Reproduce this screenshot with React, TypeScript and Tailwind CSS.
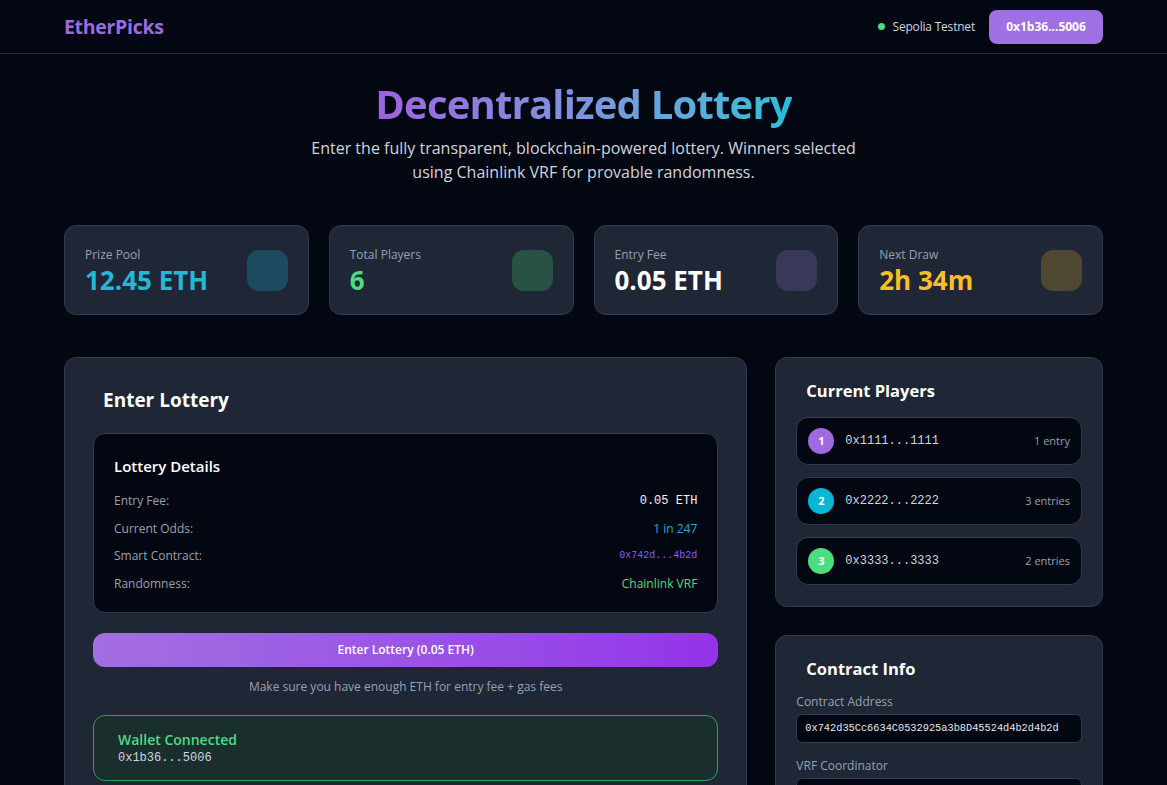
import React from "react";

const stats = [
  { label: "Prize Pool", value: "12.45 ETH", valueClass: "text-[#22b8d8]", boxClass: "bg-[#1c4a5e]" },
  { label: "Total Players", value: "6", valueClass: "text-[#4ade80]", boxClass: "bg-[#285243]" },
  { label: "Entry Fee", value: "0.05 ETH", valueClass: "text-white", boxClass: "bg-[#3a3858]" },
  { label: "Next Draw", value: "2h 34m", valueClass: "text-[#fbbf24]", boxClass: "bg-[#4e4833]" },
];

const players = [
  { n: 1, addr: "0x1111...1111", entries: "1 entry", dot: "bg-[#9f6ae0]" },
  { n: 2, addr: "0x2222...2222", entries: "3 entries", dot: "bg-[#06b6d4]" },
  { n: 3, addr: "0x3333...3333", entries: "2 entries", dot: "bg-[#4ade80]" },
];

const mono = "font-['Liberation_Mono',monospace]";

const App = () => {
  return (
    <div className="min-h-screen bg-[#030712] text-white font-['Open_Sans',sans-serif]">
      {/* Header */}
      <header className="h-[54px] border-b border-[#1e293b]">
        <div className="h-full px-16 flex items-center justify-between">
          <span className="text-[19.5px] font-bold text-[#9b6be0] tracking-[-0.3px]">EtherPicks</span>
          <div className="flex items-center">
            <span className="w-[7px] h-[7px] rounded-full bg-[#4ade80] mr-[8px]" />
            <span className="text-[12px] tracking-[-0.2px] text-gray-300 mr-[14px]">Sepolia Testnet</span>
            <button className="h-[34px] w-[114px] rounded-lg bg-[#9f70e3] text-white text-[12px] font-bold">
              0x1b36...5006
            </button>
          </div>
        </div>
      </header>

      <main className="px-16">
        {/* Hero */}
        <section className="pt-[26px] text-center">
          <h1 className="text-[40px] leading-[48px] font-bold tracking-[-0.8px] bg-gradient-to-r from-[#9d62e0] to-[#1fc0d8] bg-clip-text text-transparent inline-block">
            Decentralized Lottery
          </h1>
          <p className="mt-2 mx-auto max-w-[560px] text-[16px] leading-6 text-gray-300">
            Enter the fully transparent, blockchain-powered lottery. Winners selected using Chainlink VRF for provable randomness.
          </p>
        </section>

        {/* Stats */}
        <section className="mt-[41px] grid grid-cols-4 gap-5">
          {stats.map((s) => (
            <div
              key={s.label}
              className="h-[90px] rounded-xl bg-[#1f2635] border border-[#323b4b] px-5 flex items-center justify-between"
            >
              <div className="pt-[3px]">
                <div className="text-[12px] leading-4 font-medium text-gray-400">{s.label}</div>
                <div className={`mt-px text-[26px] leading-8 font-bold ${s.valueClass}`}>{s.value}</div>
              </div>
              <div className={`w-[41px] h-[41px] rounded-xl ${s.boxClass}`} />
            </div>
          ))}
        </section>

        {/* Main */}
        <section className="mt-[42px] grid grid-cols-3 gap-7 items-start">
          {/* Enter Lottery */}
          <div className="col-span-2 rounded-xl bg-[#1f2635] border border-[#323b4b] px-7 pt-7 pb-6">
            <h2 className="pl-2.5 text-[19px] leading-7 font-bold">Enter Lottery</h2>

            <div className="mt-[19px] rounded-xl bg-[#030712] border border-[#323b4b] px-5 pt-5 pb-[18px]">
              <h3 className="text-[15px] leading-6 font-semibold">Lottery Details</h3>
              <div className="mt-[13px] flex flex-col gap-[7.5px] text-[12px] leading-5">
                <div className="flex justify-between">
                  <span className="text-gray-400">Entry Fee:</span>
                  <span className={`${mono} text-gray-100`}>0.05 ETH</span>
                </div>
                <div className="flex justify-between">
                  <span className="text-gray-400">Current Odds:</span>
                  <span className="text-[#22a8d0]">1 in 247</span>
                </div>
                <div className="flex justify-between">
                  <span className="text-gray-400">Smart Contract:</span>
                  <span className={`${mono} text-[10px] text-[#8b5cf6]`}>0x742d...4b2d</span>
                </div>
                <div className="flex justify-between">
                  <span className="text-gray-400">Randomness:</span>
                  <span className="text-[#4ade80]">Chainlink VRF</span>
                </div>
              </div>
            </div>

            <button className="mt-5 w-full h-[34px] rounded-xl bg-gradient-to-r from-[#a36ee0] to-[#9333ea] text-[12px] font-semibold text-white">
              Enter Lottery (0.05 ETH)
            </button>
            <p className="mt-2.5 text-center text-[12px] leading-5 text-gray-400">
              Make sure you have enough ETH for entry fee + gas fees
            </p>

            <div className="mt-[18px] rounded-xl border border-[#2f9e5c] bg-[#1a2e2e] px-6 py-3.5">
              <div className="text-[14px] leading-5 font-semibold text-[#4ade80]">Wallet Connected</div>
              <div className={`${mono} text-[12px] leading-4 text-gray-300`}>0x1b36...5006</div>
            </div>
          </div>

          {/* Right column */}
          <div className="flex flex-col gap-7">
            <div className="rounded-xl bg-[#1f2635] border border-[#323b4b] px-5 pt-[19px] pb-[21px]">
              <h2 className="pl-2.5 text-[16.5px] leading-7 font-bold">Current Players</h2>
              <div className="mt-3 flex flex-col gap-3">
                {players.map((p) => (
                  <div
                    key={p.n}
                    className="h-[48px] rounded-xl bg-[#030712] border border-[#323b4b] px-[11px] flex items-center"
                  >
                    <span
                      className={`w-[26px] h-[26px] rounded-full ${p.dot} flex items-center justify-center text-[11px] font-bold text-white`}
                    >
                      {p.n}
                    </span>
                    <span className={`${mono} ml-[11px] text-[12px] text-gray-300`}>{p.addr}</span>
                    <span className="ml-auto text-[11px] text-gray-400">{p.entries}</span>
                  </div>
                ))}
              </div>
            </div>

            <div className="rounded-xl bg-[#1f2635] border border-[#323b4b] px-5 pt-[19px] pb-5">
              <h2 className="pl-2.5 text-[16.5px] leading-7 font-bold">Contract Info</h2>
              <div className="mt-[11px] text-[12px] leading-4 text-gray-400">Contract Address</div>
              <div
                className={`mt-1 h-[29px] rounded-md bg-[#030712] border border-[#323b4b] px-2 flex items-center ${mono} text-[10.3px] text-gray-200`}
              >
                0x742d35Cc6634C0532925a3b8D45524d4b2d4b2d
              </div>
              <div className="mt-[15px] text-[12px] leading-4 text-gray-400">VRF Coordinator</div>
              <div
                className={`mt-1 h-[29px] rounded-md bg-[#030712] border border-[#323b4b] px-2 flex items-center ${mono} text-[10.3px] text-gray-200`}
              >
                0x8103B0A8A00be2DDC778e6e7eaa21791Cd364625
              </div>
            </div>
          </div>
        </section>
        <div className="h-10" />
      </main>
    </div>
  );
};

export default App;
